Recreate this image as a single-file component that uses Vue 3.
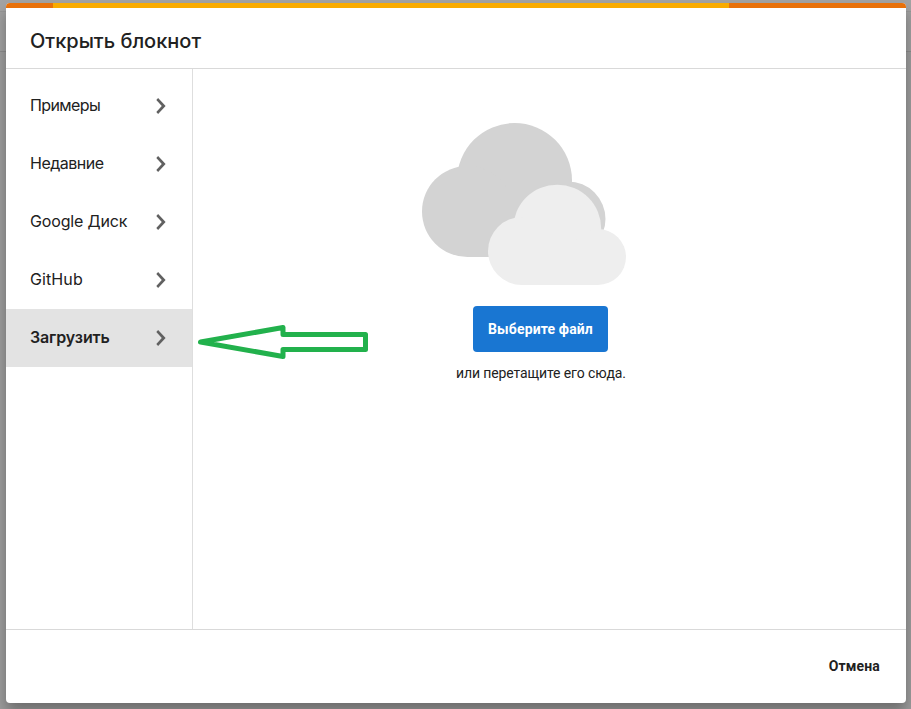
<script setup>
const items = [
  { label: 'Примеры', cls: 'samples' },
  { label: 'Недавние', cls: 'recent' },
  { label: 'Google Диск', cls: 'drive' },
  { label: 'GitHub', cls: 'github' },
  { label: 'Загрузить', cls: 'upload', active: true },
]
</script>

<template>
  <div class="backdrop">
    <div class="dialog">
      <div class="progress"><i class="start"></i><i class="mid"></i><i class="end"></i></div>
      <header class="header"><h1>Открыть блокнот</h1></header>
      <div class="body">
        <nav class="sidebar">
          <div v-for="item in items" :key="item.label" class="item" :class="{ active: item.active }">
            <span :class="item.cls">{{ item.label }}</span>
            <svg class="chevron" width="10" height="16" viewBox="0 0 10 16">
              <path d="M2.1 0L9.6 8L2.1 16L0.300 14.100L5.800 8L0.300 1.900z" fill="#616161" />
            </svg>
          </div>
        </nav>
        <main class="content">
          <svg class="clouds" width="204" height="162" viewBox="422 123 204 162">
            <g fill="#d3d3d3">
              <circle cx="514.500" cy="180.500" r="57.500" />
              <circle cx="467.500" cy="211.500" r="45.500" />
              <circle cx="568" cy="219" r="37.500" />
              <rect x="467" y="190" width="101" height="67" />
            </g>
            <g fill="#eeeeee">
              <circle cx="557.200" cy="228.700" r="44" />
              <circle cx="522" cy="251" r="34" />
              <circle cx="598" cy="257" r="28" />
              <rect x="522" y="240" width="76" height="45" />
            </g>
          </svg>
          <button class="choose"><span>Выберите файл</span></button>
          <p class="hint"><span>или перетащите его сюда.</span></p>
        </main>
      </div>
      <footer class="footer"><span class="cancel">Отмена</span></footer>
    </div>
    <svg class="arrow" width="172" height="38" viewBox="198 323 172 38">
      <path d="M200.500 342L283 327.500V334.500H365.500V349.500H283V356.500Z" fill="#fff" stroke="#22b14c" stroke-width="5" stroke-linejoin="round" />
    </svg>
  </div>
</template>

<style>
body { margin: 0; overflow: hidden; }
</style>

<style scoped>
.backdrop {
  position: relative;
  box-sizing: border-box;
  width: 911px;
  height: 709px;
  padding: 3px 5px 6px 6px;
  overflow: hidden;
  background: linear-gradient(#a3a3a3 0 11px, #979797 11px 12px, #a0a0a0 12px 51px, #8c8c8c 51px 52px, #9d9d9d 52px);
  color: #212121;
}
.dialog {
  display: flex;
  flex-direction: column;
  width: 900px;
  height: 700px;
  overflow: hidden;
  border-radius: 4px;
  background: #fff;
  box-shadow: 0 9px 14px rgba(0, 0, 0, .3);
}
.progress { display: flex; height: 5px; flex: none; }
.start { width: 47px; background: #e8710a; }
.mid { width: 676px; background: #f9ab00; }
.end { flex: 1; background: #e8710a; }
.header {
  box-sizing: border-box;
  height: 61px;
  padding: 0 24px;
  display: flex;
  align-items: center;
  border-bottom: 1px solid #d9d9d9;
}
h1 {
  margin: 6px 0 0;
  font: 500 20px/28px Inter, sans-serif;
  white-space: nowrap;
}
.body { display: flex; height: 560px; }
.sidebar {
  box-sizing: border-box;
  width: 187px;
  padding-top: 8px;
  border-right: 1px solid #dedede;
}
.item {
  box-sizing: border-box;
  display: flex;
  align-items: center;
  justify-content: space-between;
  height: 58px;
  padding: 0 26px 0 24px;
  font: 400 16px/24px Inter, sans-serif;
  white-space: nowrap;
}
.item span { margin-bottom: 2px; }
.samples { letter-spacing: -.6px; }
.recent { letter-spacing: -.5px; }
.drive { letter-spacing: -.15px; }
.github { letter-spacing: .1px; }
.upload { letter-spacing: -.13px; }
.item.active { background: #e3e3e3; font-weight: 600; }
.content {
  flex: 1;
  display: flex;
  flex-direction: column;
  align-items: flex-start;
  padding-top: 54px;
}
.clouds { flex: none; margin-left: 229px; }
.choose {
  width: 135px;
  height: 46px;
  margin: 21px 0 0 280px;
  padding: 0;
  border: 0;
  border-radius: 4px;
  background: #1976d2;
  color: #fff;
  font: 700 14px/20px Roboto, sans-serif;
  letter-spacing: .13px;
  white-space: nowrap;
}
.hint {
  margin: 11px 0 0 263px;
  font: 400 14px/20px Roboto, sans-serif;
  letter-spacing: -.11px;
  white-space: nowrap;
}
.footer {
  flex: 1;
  display: flex;
  align-items: center;
  justify-content: flex-end;
  padding: 0 26px 2px 0;
  border-top: 1px solid #d9d9d9;
}
.cancel { font: 700 14px/20px Roboto, sans-serif; letter-spacing: .15px; }
.arrow { position: absolute; left: 198px; top: 323px; }
</style>
